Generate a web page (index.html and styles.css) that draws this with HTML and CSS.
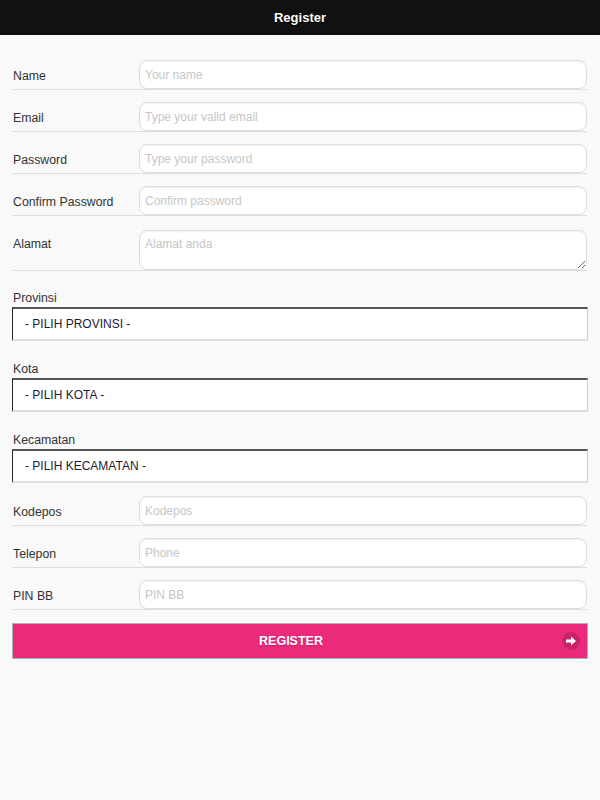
FILE: index.html
```html
<!DOCTYPE html>
<html>
<head>
<meta charset="utf-8">
<title>Register</title>
<link rel="stylesheet" href="styles.css">
</head>
<body>
<header class="bar"><h1 class="title">Register</h1></header>
<main class="content">
  <form class="form">
    <div class="row"><label class="lbl">Name</label><input class="field" type="text" placeholder="Your name"></div>
    <div class="row"><label class="lbl">Email</label><input class="field" type="text" placeholder="Type your valid email"></div>
    <div class="row"><label class="lbl">Password</label><input class="field" type="password" placeholder="Type your password"></div>
    <div class="row"><label class="lbl">Confirm Password</label><input class="field" type="password" placeholder="Confirm password"></div>
    <div class="row row-top"><label class="lbl lbl-top">Alamat</label><textarea class="field area" placeholder="Alamat anda"></textarea></div>

    <div class="sel-group"><label class="sel-lbl">Provinsi</label><div class="select">- PILIH PROVINSI -</div></div>
    <div class="sel-group"><label class="sel-lbl">Kota</label><div class="select">- PILIH KOTA -</div></div>
    <div class="sel-group last"><label class="sel-lbl">Kecamatan</label><div class="select">- PILIH KECAMATAN -</div></div>

    <div class="row"><label class="lbl">Kodepos</label><input class="field" type="text" placeholder="Kodepos"></div>
    <div class="row"><label class="lbl">Telepon</label><input class="field" type="text" placeholder="Phone"></div>
    <div class="row"><label class="lbl">PIN BB</label><input class="field" type="text" placeholder="PIN BB"></div>

    <button class="btn" type="button">REGISTER
      <span class="btn-icon"><svg width="12" height="12" viewBox="0 0 12 12"><path d="M1 4.5h5V1.5L11 6 6 10.5V7.5H1z" fill="#fff"/></svg></span>
    </button>
  </form>
</main>
</body>
</html>
```
FILE: styles.css
```css
html, body { margin: 0; padding: 0; }
body {
  background: #f9f9f9;
  font-family: "Liberation Sans", Arial, sans-serif;
  color: #333;
  width: 600px;
  min-height: 800px;
}
.bar {
  background: #111;
  height: 35px;
  display: flex;
  align-items: center;
  justify-content: center;
}
.title {
  margin: 0;
  color: #fff;
  font-size: 13px;
  font-weight: bold;
  text-shadow: 0 1px 0 #000;
}
.content { padding: 25px 12px 0 12px; }
.form { display: flex; flex-direction: column; }
.row {
  display: flex;
  align-items: center;
  border-bottom: 1px solid #ddd;
  margin-bottom: 12px;
  width: 575px;
}
.row-top { align-items: flex-start; margin-top: 2px; margin-bottom: 19px; }
.lbl {
  width: 126px;
  padding-left: 1px;
  padding-top: 2px;
  flex: none;
  font-size: 12.3px;
  color: #333;
}
.lbl-top { padding-top: 7px; }
.field {
  flex: 1;
  box-sizing: border-box;
  height: 29px;
  margin: 0;
  border: 1px solid #ddd;
  border-radius: 8px;
  background: #fff;
  box-shadow: inset 0 1px 2px rgba(0,0,0,0.06);
  padding: 0 5px;
  font-family: "Liberation Sans", Arial, sans-serif;
  font-size: 12px;
  color: #333;
  outline: none;
}
.field::placeholder { color: #c6c6c6; }
.area {
  height: 40px;
  padding-top: 6px;
  resize: vertical;
  display: block;
}
.sel-group {
  display: flex;
  flex-direction: column;
  margin-bottom: 20px;
}
.sel-group.last { margin-bottom: 13px; }
.sel-lbl {
  font-size: 12.3px;
  line-height: 16px;
  color: #333;
  padding-left: 1px;
  margin-bottom: 1px;
}
.select {
  box-sizing: border-box;
  width: 576px;
  height: 34px;
  background: #fff;
  border-top: 2px solid #555;
  border-left: 1px solid #222;
  border-right: 1px solid #cfcfc8;
  border-bottom: 2px solid #ddd;
  padding-left: 12px;
  display: flex;
  align-items: center;
  font-size: 12px;
  color: #1a1a3a;
}
.btn {
  position: relative;
  width: 576px;
  height: 36px;
  margin-top: 1px;
  background: #ec2a7b;
  border: 1px solid #a9b4b2;
  color: #fff;
  font-family: "Liberation Sans", Arial, sans-serif;
  font-size: 12.5px;
  font-weight: bold;
  text-shadow: 0 1px 1px rgba(0,0,0,0.2);
  padding: 0 18px 0 0;
}
.btn-icon {
  position: absolute;
  right: 7px;
  top: 8px;
  width: 18px;
  height: 18px;
  border-radius: 50%;
  background: rgba(0,0,0,0.15);
  display: flex;
  align-items: center;
  justify-content: center;
}
.btn-icon svg { display: block; }
```
